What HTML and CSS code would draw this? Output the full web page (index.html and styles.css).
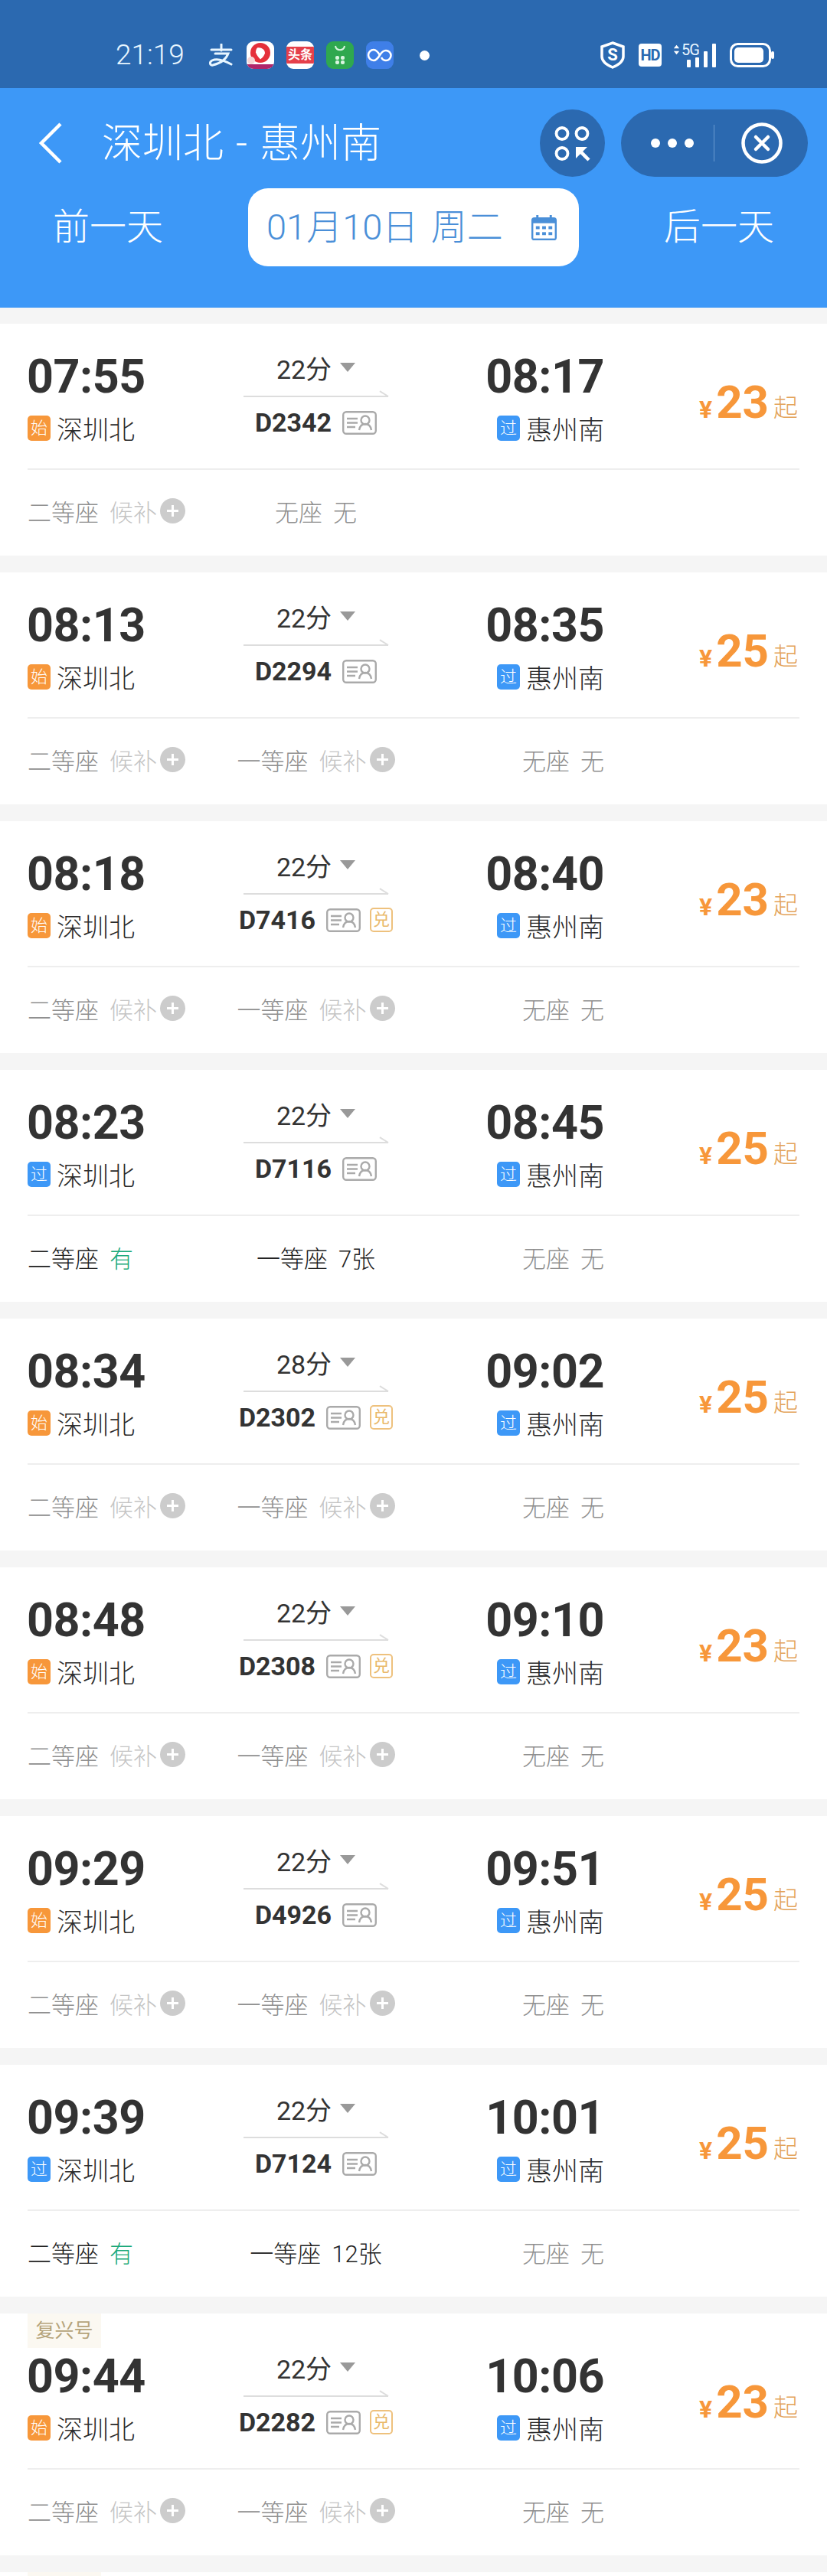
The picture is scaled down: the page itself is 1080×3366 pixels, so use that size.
FILE: index.html
```html
<!DOCTYPE html>
<html lang="zh-CN">
<head>
  <meta charset="UTF-8">
  <meta name="viewport" content="width=device-width, initial-scale=1.0">
  <title>深圳北 - 惠州南</title>
  <link rel="stylesheet" href="styles.css">
</head>
<body>
  <div class="statusbar">
    <span class="clock">21:19</span>
    <div class="notify">
      <svg class="icon-zhi" viewBox="0 0 34 30"><path d="M17 1v8M4 8h26M9 13h17c-3 8-11 13-20 15-4 1-5-4-1-6 6-3 16 0 25 5" fill="none" stroke="#e8f6ff" stroke-width="3" stroke-linecap="round"/></svg>
      <div class="app app-video"><svg viewBox="0 0 36 36"><circle cx="18" cy="15" r="13" fill="#e5303a"/><path d="M14 8.500c5-1 10 2 10 7-1 3-3 6-6 8-3-3-5-6-6-9 0-2 .5-4.500 2-6z" fill="#fff"/><circle cx="6" cy="25" r="5" fill="#f6d5d5"/><rect y="30" width="36" height="6" fill="#b0246a"/></svg></div>
      <div class="app app-news"><span>头条</span></div>
      <div class="app app-green"><svg viewBox="0 0 36 36"><path d="M12 6c1 7 11 7 12 0" fill="none" stroke="#d9f5e0" stroke-width="2"/><g fill="#d9f5e0"><rect x="12" y="19" width="5" height="5" rx="2"/><rect x="19" y="19" width="5" height="5" rx="2"/><rect x="12" y="25" width="5" height="5" rx="2"/><rect x="19" y="25" width="5" height="5" rx="2"/></g></svg></div>
      <div class="app app-blue"><svg viewBox="0 0 36 36"><path d="M18 18c-3-5-5-7-8-7a7 7 0 0 0 0 14c3 0 5-2 8-7s5-6 8-6a6 6 0 0 1 0 13c-3 0-5-2-6-4" fill="none" stroke="#fff" stroke-width="2.6"/></svg></div>
      <span class="dot"></span>
    </div>
    <div class="sysicons">
      <svg class="icon-shield" viewBox="0 0 32 36"><path d="M16 2l14 5v13c0 7-7 11-14 14C9 31 2 27 2 20V7z" fill="none" stroke="#fff" stroke-width="3.500"/><text x="16" y="25" text-anchor="middle" class="shield-s">S</text></svg>
      <span class="hd">HD</span>
      <div class="signal">
        <svg class="updown" viewBox="0 0 10 14"><path d="M5 0l4 5H1zM5 14l4-5H1z" fill="#fff"/></svg>
        <span class="fiveg">5G</span>
        <svg class="bars" viewBox="0 0 38 31"><g fill="#fff"><rect x="0" y="21" width="5" height="10" rx="1"/><rect x="11" y="18" width="5" height="13" rx="1"/><rect x="22" y="10" width="5" height="21" rx="1"/><rect x="33" y="0" width="5" height="31" rx="1"/></g></svg>
      </div>
      <svg class="icon-battery" viewBox="0 0 58 32"><rect x="1.500" y="1.500" width="51" height="29" rx="9" fill="none" stroke="#fff" stroke-width="3"/><rect x="6" y="6" width="38" height="20" rx="5" fill="#fff"/><rect x="54" y="11" width="4" height="10" rx="2" fill="#fff"/></svg>
    </div>
  </div>

  <header class="header">
    <div class="navbar">
      <svg class="back" viewBox="0 0 32 54"><path d="M29 2L4 27l25 25" fill="none" stroke="#fff" stroke-width="4.500"/></svg>
      <h1 class="title">深圳北 - 惠州南</h1>
      <div class="scan-btn">
        <svg viewBox="0 0 48 48"><g fill="none" stroke="#fff" stroke-width="3.800"><circle cx="10" cy="11.500" r="7.500"/><circle cx="36" cy="11.500" r="7.500"/><circle cx="10" cy="37.500" r="7.500"/></g><path d="M28 29h15L28 44z" fill="#fff"/><path d="M33 34l12 12" stroke="#fff" stroke-width="4.500"/></svg>
      </div>
      <div class="capsule">
        <div class="more"><i></i><i></i><i></i></div>
        <span class="capsule-line"></span>
        <svg class="close" viewBox="0 0 54 54"><circle cx="27" cy="27" r="24.500" fill="none" stroke="#fff" stroke-width="4.500"/><path d="M19 19l16 16M35 19L19 35" stroke="#fff" stroke-width="4.500" stroke-linecap="round"/></svg>
      </div>
    </div>
    <div class="datebar">
      <span class="day-link">前一天</span>
      <div class="date-pill">
        <span class="date-text">01月10日 周二</span>
        <svg class="calendar" viewBox="0 0 36 36"><path d="M9 1v6M27 1v6" stroke="#4a8fd8" stroke-width="3"/><rect x="1" y="4" width="34" height="31" rx="4" fill="#4a8fd8"/><rect x="3.500" y="12" width="29" height="20.500" fill="#fff"/><g fill="#4a8fd8"><rect x="7" y="16" width="5" height="4"/><rect x="15.500" y="16" width="5" height="4"/><rect x="24" y="16" width="5" height="4"/><rect x="7" y="24" width="5" height="4"/><rect x="15.500" y="24" width="5" height="4"/><rect x="24" y="24" width="5" height="4"/></g></svg>
      </div>
      <span class="day-link">后一天</span>
    </div>
  </header>

  <div id="list" class="list"></div>

  <script>
    const idIcon = `<svg class="id-icon" viewBox="0 0 45 31"><rect x="1.200" y="1.200" width="42.600" height="28.600" rx="4" fill="none" stroke="#aaa" stroke-width="2.400"/><path d="M6 10h14M6 15.500h14M6 21h11" stroke="#aaa" stroke-width="2.400"/><circle cx="30" cy="12" r="5.500" fill="none" stroke="#aaa" stroke-width="2.400"/><path d="M22 25c1-6 4-8 8-8s7 2 8 8" fill="none" stroke="#aaa" stroke-width="2.400"/></svg>`;

    // seat: [name, value, state] state: wait | sold | ok
    const wait2 = ["二等座", "候补", "wait"];
    const wait1 = ["一等座", "候补", "wait"];
    const none = ["无座", "无", "sold"];

    const trains = [
      { dep: "07:55", arr: "08:17", mins: "22分", no: "D2342", start: "始", price: 23, seats: [wait2, none] },
      { dep: "08:13", arr: "08:35", mins: "22分", no: "D2294", start: "始", price: 25, seats: [wait2, wait1, none] },
      { dep: "08:18", arr: "08:40", mins: "22分", no: "D7416", start: "始", price: 23, dui: true, seats: [wait2, wait1, none] },
      { dep: "08:23", arr: "08:45", mins: "22分", no: "D7116", start: "过", price: 25, seats: [["二等座", "有", "ok"], ["一等座", "7张", "ok"], none] },
      { dep: "08:34", arr: "09:02", mins: "28分", no: "D2302", start: "始", price: 25, dui: true, seats: [wait2, wait1, none] },
      { dep: "08:48", arr: "09:10", mins: "22分", no: "D2308", start: "始", price: 23, dui: true, seats: [wait2, wait1, none] },
      { dep: "09:29", arr: "09:51", mins: "22分", no: "D4926", start: "始", price: 25, seats: [wait2, wait1, none] },
      { dep: "09:39", arr: "10:01", mins: "22分", no: "D7124", start: "过", price: 25, seats: [["二等座", "有", "ok"], ["一等座", "12张", "ok"], none] },
      { dep: "09:44", arr: "10:06", mins: "22分", no: "D2282", start: "始", price: 23, dui: true, fx: true, seats: [wait2, wait1, none] },
      { fx: true, stub: true },
    ];

    function seatHtml(s) {
      const [name, value, state] = s;
      const plus = state === "wait" ? `<span class="plus"></span>` : "";
      return `<div class="seat seat-${state}"><span class="seat-name">${name}</span><span class="seat-value">${value}</span>${plus}</div>`;
    }

    document.getElementById("list").innerHTML = trains.map(t => {
      if (t.stub) return `<div class="card card-stub"><span class="fx-tag"></span></div>`;
      const startClass = t.start === "始" ? "badge-start" : "badge-pass";
      return `
        <div class="card${t.fx ? " card-fx" : ""}">
          ${t.fx ? `<span class="fx-tag">复兴号</span>` : ""}
          <div class="main">
            <div class="stop">
              <div class="time">${t.dep}</div>
              <div class="station"><span class="badge ${startClass}">${t.start}</span>深圳北</div>
            </div>
            <div class="route">
              <div class="duration">${t.mins}<span class="caret"></span></div>
              <div class="arrow"></div>
              <div class="train-no"><b>${t.no}</b>${idIcon}${t.dui ? `<span class="dui">兑</span>` : ""}</div>
            </div>
            <div class="stop stop-arr">
              <div class="time">${t.arr}</div>
              <div class="station"><span class="badge badge-pass">过</span>惠州南</div>
            </div>
            <div class="price"><span class="yen">¥</span><span class="amount">${t.price}</span><span class="qi">起</span></div>
          </div>
          <div class="seats">${t.seats.map(seatHtml).join("")}</div>
        </div>`;
    }).join("");
  </script>
</body>
</html>
```
FILE: styles.css
```css
* {
  box-sizing: border-box;
}
html, body {
  margin: 0;
  padding: 0;
}
body {
  width: 1080px;
  height: 3366px;
  overflow: hidden;
  background: #f5f5f5;
  font-family: Roboto, "Noto Sans CJK SC", sans-serif;
  color: #333;
}

/* status bar */
.statusbar {
  height: 115px;
  background: #2b69b0;
  color: #e8f6ff;
  display: flex;
  align-items: flex-start;
  padding: 54px 0 0 151px;
}
.clock {
  width: 121px;
  font-size: 37px;
  line-height: 36px;
  font-weight: 300;
}
.notify {
  display: flex;
  align-items: center;
  height: 36px;
  width: 512px;
}
.icon-zhi {
  width: 34px;
  height: 30px;
  margin-right: 16px;
}
.app {
  width: 36px;
  height: 36px;
  border-radius: 9px;
  margin-right: 16px;
  overflow: hidden;
  background: #fff;
}
.app svg {
  display: block;
  width: 36px;
  height: 36px;
}
.app-news {
  display: flex;
  align-items: center;
  justify-content: center;
}
.app-news span {
  width: 100%;
  background: #e5404a;
  color: #fff;
  font-size: 16px;
  line-height: 22px;
  font-weight: 700;
  text-align: center;
}
.app-green {
  background: #2fa84f;
}
.app-blue {
  background: #3f7fe8;
}
.dot {
  width: 13px;
  height: 13px;
  margin-left: 18px;
  border-radius: 50%;
  background: #fff;
}
.sysicons {
  display: flex;
  align-items: center;
  height: 36px;
}
.icon-shield {
  width: 32px;
  height: 36px;
  margin-right: 18px;
}
.shield-s {
  font: 700 22px Roboto, sans-serif;
  fill: #fff;
}
.hd {
  width: 30px;
  height: 30px;
  border-radius: 4px;
  background: #fff;
  color: #2b69b0;
  font-size: 20px;
  line-height: 30px;
  font-weight: 700;
  text-align: center;
  letter-spacing: -1px;
  margin-right: 15px;
}
.signal {
  position: relative;
  width: 56px;
  height: 32px;
  margin-right: 18px;
}
.updown {
  position: absolute;
  left: 0;
  top: 2px;
  width: 9px;
  height: 14px;
}
.fiveg {
  position: absolute;
  left: 11px;
  top: 0;
  font-size: 20px;
  line-height: 18px;
  letter-spacing: -1px;
}
.bars {
  position: absolute;
  right: 0;
  top: 1px;
  width: 38px;
  height: 31px;
}
.icon-battery {
  width: 58px;
  height: 32px;
}

/* blue header */
.header {
  height: 287px;
  background: #3d98f7;
  color: #fff;
  padding-top: 28px;
}
.navbar {
  display: flex;
  align-items: center;
  height: 88px;
}
.back {
  width: 32px;
  height: 54px;
  margin-left: 50px;
}
.title {
  margin: 0 0 0 51px;
  width: 572px;
  padding-top: 2px;
  font-size: 53px;
  line-height: 60px;
  font-weight: 300;
  word-spacing: 3px;
  white-space: nowrap;
}
.scan-btn {
  width: 85px;
  height: 88px;
  border-radius: 50%;
  background: #2b69b0;
  display: flex;
  align-items: center;
  justify-content: center;
}
.scan-btn svg {
  width: 48px;
  height: 48px;
}
.capsule {
  width: 244px;
  height: 88px;
  margin-left: 21px;
  border-radius: 44px;
  background: #2b69b0;
  display: flex;
  align-items: center;
  padding-left: 39px;
}
.more {
  display: flex;
  gap: 10px;
  width: 82px;
}
.more i {
  width: 12px;
  height: 12px;
  border-radius: 50%;
  background: #fff;
}
.capsule-line {
  width: 1px;
  height: 48px;
  background: #6a9ad0;
}
.close {
  width: 54px;
  height: 54px;
  margin-left: 35px;
}
.datebar {
  display: flex;
  align-items: center;
  height: 102px;
  margin-top: 15px;
}
.day-link {
  width: 324px;
  font-size: 48px;
  font-weight: 300;
  padding: 0 0 10px 69px;
}
.day-link:last-child {
  padding-left: 111px;
}
.date-pill {
  width: 432px;
  height: 102px;
  border-radius: 26px;
  background: #fff;
  color: #4a8fd8;
  display: flex;
  align-items: center;
  padding-left: 24px;
}
.date-text {
  width: 345px;
  padding-bottom: 10px;
  font-size: 47px;
  font-weight: 300;
  word-spacing: 5px;
  white-space: nowrap;
}
.calendar {
  width: 35px;
  height: 35px;
}

/* train cards */
.list {
  padding-top: 21px;
}
.card {
  position: relative;
  height: 303px;
  margin-bottom: 22px;
  padding: 0 36px;
  background: #fff;
}
.card-fx {
  height: 316px;
  padding-top: 13px;
}
.card-stub {
  height: 60px;
  margin: 0;
}
.fx-tag {
  position: absolute;
  left: 36px;
  top: 0;
  width: 96px;
  height: 45px;
  background: #fbf8f1;
  color: #b5a37a;
  font-size: 25px;
  line-height: 45px;
  text-align: center;
}
.main {
  position: relative;
  display: flex;
  height: 191px;
  border-bottom: 2px solid #eee;
}
.stop {
  width: 152px;
  padding-top: 39px;
}
.stop-arr {
  width: 282px;
  text-align: right;
  display: flex;
  flex-direction: column;
  align-items: flex-end;
}
.time {
  margin-left: -1px;
  font-size: 61px;
  line-height: 60px;
  font-weight: 700;
  letter-spacing: -0.5px;
  white-space: nowrap;
}
.station {
  display: flex;
  align-items: center;
  height: 34px;
  margin-top: 20px;
  color: #2b2b2b;
  font-size: 34px;
  font-weight: 300;
  white-space: nowrap;
}
.badge {
  width: 30px;
  height: 33px;
  margin-right: 8px;
  border-radius: 5px;
  color: #fff;
  font-size: 22px;
  line-height: 33px;
  text-align: center;
}
.badge-start {
  background: #f7973a;
}
.badge-pass {
  background: #3d98f7;
}
.route {
  width: 319px;
  padding: 0 0 0 130px;
}
.duration {
  display: flex;
  align-items: center;
  justify-content: center;
  width: 189px;
  height: 46px;
  margin-top: 34px;
  font-size: 34px;
  font-weight: 400;
}
.caret {
  width: 0;
  height: 0;
  margin-left: 11px;
  border-left: 10px solid transparent;
  border-right: 10px solid transparent;
  border-top: 12px solid #999;
}
.arrow {
  position: relative;
  width: 189px;
  height: 2px;
  margin-top: 14px;
  background: #ddd;
}
.arrow::after {
  content: "";
  position: absolute;
  right: 0;
  top: 0;
  width: 13px;
  height: 2px;
  background: #ddd;
  transform: rotate(32deg);
  transform-origin: right center;
}
.train-no {
  display: flex;
  align-items: center;
  justify-content: center;
  width: 189px;
  height: 32px;
  margin-top: 17px;
  white-space: nowrap;
}
.train-no b {
  font-size: 34px;
  font-weight: 700;
}
.id-icon {
  width: 45px;
  height: 31px;
  margin-left: 14px;
  flex: none;
}
.dui {
  width: 30px;
  height: 32px;
  margin-left: 12px;
  flex: none;
  border: 2px solid #eec17d;
  border-radius: 5px;
  color: #e9b96b;
  font-size: 22px;
  line-height: 28px;
  text-align: center;
}
.price {
  display: flex;
  align-items: baseline;
  justify-content: flex-end;
  width: 255px;
  height: 60px;
  margin-top: 73px;
  padding-right: 2px;
  color: #f7973a;
}
.yen {
  font-size: 32px;
  font-weight: 700;
  margin-right: 5px;
}
.amount {
  font-size: 60px;
  line-height: 60px;
  font-weight: 700;
}
.qi {
  margin-left: 6px;
  color: #e3a35a;
  font-size: 32px;
  font-weight: 300;
  transform: translateY(-2px);
}
.seats {
  display: grid;
  grid-template-columns: 1fr auto 1fr;
  align-items: center;
  width: 753px;
  height: 110px;
  padding-bottom: 3px;
  font-size: 31px;
  font-weight: 300;
}
.seat {
  display: flex;
  align-items: center;
  white-space: nowrap;
  color: #8f8f8f;
}
.seat:last-child {
  justify-self: end;
}
.seat:nth-child(2):last-child {
  grid-column: 2;
  justify-self: center;
}
.seat-value {
  margin-left: 14px;
}
.seat-wait .seat-value {
  color: #c4c4c4;
}
.seat-ok {
  color: #222;
}
.seat-ok:first-child .seat-value {
  color: #1aa97a;
}
.plus {
  position: relative;
  width: 33px;
  height: 33px;
  margin-left: 4px;
  border-radius: 50%;
  background: #ccc;
}
.plus::before,
.plus::after {
  content: "";
  position: absolute;
  left: 9px;
  top: 15px;
  width: 15px;
  height: 3px;
  background: #fff;
}
.plus::after {
  transform: rotate(90deg);
}
```
